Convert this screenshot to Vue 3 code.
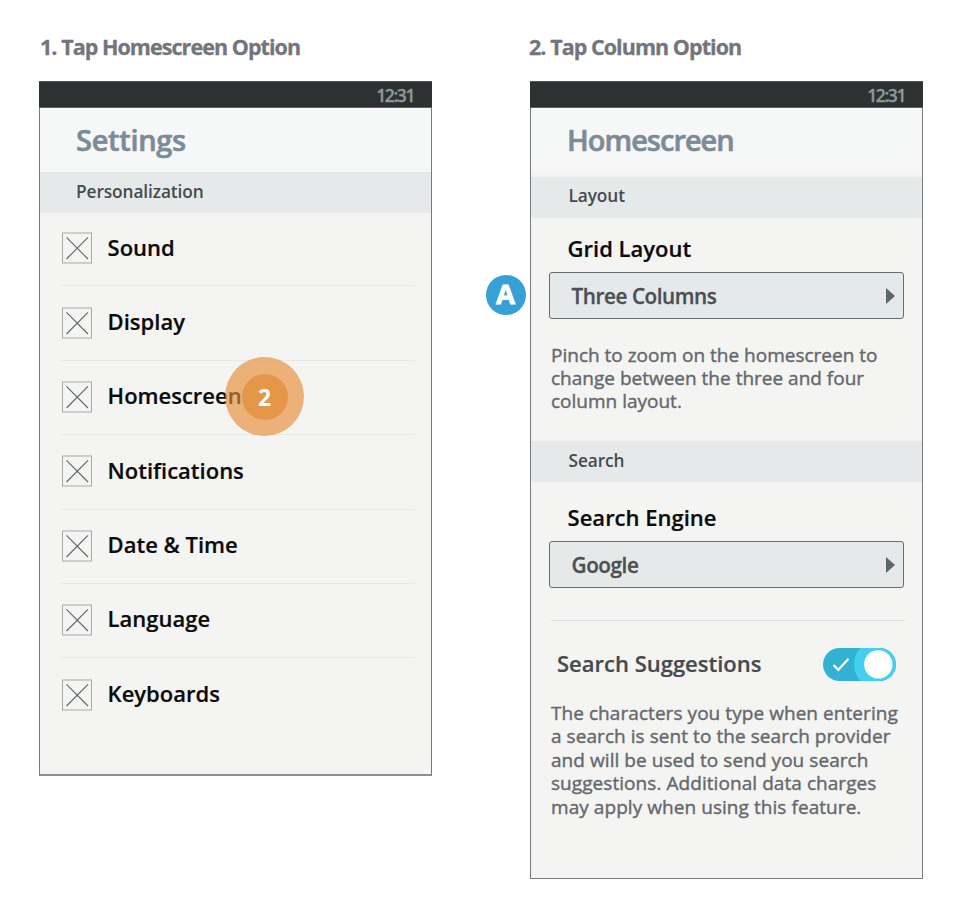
<script setup>
const options = ['Sound', 'Display', 'Homescreen', 'Notifications', 'Date & Time', 'Language', 'Keyboards']
const pinchHelp = `Pinch to zoom on the homescreen to
change between the three and four
column layout.`
const suggestHelp = `The characters you type when entering
a search is sent to the search provider
and will be used to send you search
suggestions. Additional data charges
may apply when using this feature.`
</script>

<template>
  <main class="board">
    <section class="step">
      <h2 class="step-title">1. Tap Homescreen Option</h2>
      <div class="phone phone-settings">
        <div class="status"><span>12:31</span></div>
        <header class="head">Settings</header>
        <div class="group">Personalization</div>
        <ul class="list">
          <li v-for="o in options" :key="o" class="row">
            <svg class="box" viewBox="0 0 32 32">
              <rect x="1.500" y="1" width="29" height="30" fill="none" stroke="#a3aaa8" />
              <path d="M5.500 5.300 27 27M27 5.300 5.500 27" stroke="#5b6966" stroke-width="1.100" fill="none" />
            </svg>
            <span class="label option">{{ o }}</span>
            <span v-if="o === 'Homescreen'" class="tap"><span class="tap-core">2</span></span>
          </li>
        </ul>
      </div>
    </section>

    <section class="step">
      <h2 class="step-title title-two">2. Tap Column Option</h2>
      <div class="phone phone-home">
        <div class="status"><span>12:31</span></div>
        <header class="head head-home">Homescreen</header>
        <div class="group group-layout">Layout</div>
        <div class="field">
          <div class="label field-label">Grid Layout</div>
          <div class="select">
            <span>Three Columns</span>
            <svg class="arrow" viewBox="0 0 9 16"><path d="M0 0 9 8 0 16Z" fill="#5b6966" /></svg>
            <span class="badge">A</span>
          </div>
        </div>
        <p class="help help-pinch">{{ pinchHelp }}</p>
        <div class="group group-search">Search</div>
        <div class="field field-engine">
          <div class="label field-label">Search Engine</div>
          <div class="select">
            <span>Google</span>
            <svg class="arrow" viewBox="0 0 9 16"><path d="M0 0 9 8 0 16Z" fill="#5b6966" /></svg>
          </div>
        </div>
        <hr class="rule" />
        <div class="suggest">
          <span class="label suggest-label">Search Suggestions</span>
          <svg class="toggle" viewBox="0 0 73 33">
            <rect width="73" height="33" rx="16.500" fill="#32b2d2" />
            <path d="M37.500 0H56.500a16.500 16.500 0 0 1 0 33H37.500Q31 26 31 16.500T37.500 0Z" fill="#43cef2" />
            <circle cx="55.300" cy="16.400" r="14.200" fill="#fff" />
            <path d="M10.500 17 15.300 21.800 25.500 10.800" fill="none" stroke="#fff" stroke-width="2.200" />
          </svg>
        </div>
        <p class="help help-suggest">{{ suggestHelp }}</p>
      </div>
    </section>
  </main>
</template>

<style>
body {
  margin: 0;
  background: #fff;
}
</style>

<style scoped>
.board {
  box-sizing: border-box;
  width: 966px;
  height: 922px;
  padding: 32px 0 0 39px;
  display: flex;
  gap: 98px;
  align-items: flex-start;
  font-family: 'Open Sans', 'Noto Sans', sans-serif;
  white-space: nowrap;
}
.step {
  width: 393px;
}
.step-title {
  margin: 0 0 19px 1px;
  height: 30px;
  line-height: 30px;
  font-size: 21.5px;
  font-weight: 700;
  letter-spacing: -0.95px;
  -webkit-text-stroke: 0.3px #74757b;
  color: #74757b;
}
.title-two {
  margin-left: -1px;
}
.phone {
  box-sizing: border-box;
  border: 1px solid #77797c;
  border-top: 0;
  background: #f4f4f2;
  display: flex;
  flex-direction: column;
}
.phone-settings {
  height: 695px;
  border-bottom-width: 2px;
  border-bottom-color: #8d8f92;
}
.phone-home {
  height: 798px;
}
.status {
  box-sizing: border-box;
  height: 27px;
  margin: 0 -1px;
  padding: 2px 18px 0 0;
  background: #2d3132;
  border-top: 1px solid #505656;
  border-bottom: 1px solid #5d6363;
  display: flex;
  justify-content: flex-end;
  line-height: 23px;
  font-size: 17.5px;
  font-weight: 600;
  letter-spacing: -1.4px;
  -webkit-text-stroke: 0.3px #8f9898;
  color: #8f9898;
}
.head {
  height: 64px;
  line-height: 64px;
  padding-left: 36px;
  background: #f6f8f8;
  font-size: 29px;
  font-weight: 600;
  letter-spacing: -0.3px;
  -webkit-text-stroke: 0.6px #7b8b98;
  color: #7b8b98;
}
.head-home {
  margin-bottom: 5px;
  letter-spacing: -1px;
}
.group {
  height: 41px;
  line-height: 39px;
  padding-left: 36px;
  background: #e5e9ea;
  font-size: 17.3px;
  font-weight: 600;
  letter-spacing: -0.1px;
  color: #454b4d;
}
.group-layout,
.group-search {
  padding-left: 37.5px;
  line-height: 38px;
}
.group-search {
  line-height: 40px;
}
.label {
  font-size: 22px;
  font-weight: 600;
  -webkit-text-stroke: 0.2px currentColor;
  color: #0b0b0b;
}
.list {
  list-style: none;
  margin: -1px 16px 0 21px;
  padding: 0;
}
.row {
  position: relative;
  box-sizing: border-box;
  height: 74.4px;
  padding-bottom: 1px;
  display: flex;
  align-items: center;
  gap: 14.6px;
  border-bottom: 1px solid #e6e8e8;
}
.row:last-child {
  border-bottom: 0;
}
.option {
  padding-bottom: 3.4px;
}
.box {
  width: 32px;
  height: 32px;
  flex: none;
}
.tap {
  position: absolute;
  left: 164px;
  top: -3.4px;
  width: 79px;
  height: 79px;
  border-radius: 50%;
  background: rgba(230, 142, 56, 0.65);
  display: flex;
  align-items: center;
  justify-content: center;
}
.tap-core {
  width: 46px;
  height: 46px;
  line-height: 46px;
  border-radius: 50%;
  background: #e59649;
  color: #fff;
  font-size: 23px;
  font-weight: 700;
  text-align: center;
}
.field {
  padding: 14px 18px 0 18px;
}
.field-engine {
  padding-top: 19px;
}
.field-label {
  height: 40px;
  line-height: 32px;
  padding-left: 18.6px;
}
.select {
  position: relative;
  box-sizing: border-box;
  height: 47px;
  border: 1px solid #63706d;
  border-radius: 3px;
  background: #e5e9ea;
  padding: 0 8px 0 21.6px;
  display: flex;
  align-items: center;
  justify-content: space-between;
  font-size: 20.7px;
  font-weight: 600;
  letter-spacing: -0.44px;
  -webkit-text-stroke: 0.3px #4a5052;
  color: #4a5052;
}
.arrow {
  width: 9px;
  height: 16px;
}
.badge {
  position: absolute;
  left: -64.5px;
  top: 2px;
  width: 40px;
  height: 40px;
  line-height: 38px;
  border-radius: 50%;
  background: #37a1d5;
  color: #fff;
  font-size: 27.5px;
  font-weight: 700;
  letter-spacing: 0;
  -webkit-text-stroke: 0.8px #fff;
  text-align: center;
}
.help {
  margin: 0;
  padding-left: 20px;
  font-size: 19px;
  -webkit-text-stroke: 0.4px #65686d;
  color: #65686d;
  white-space: pre;
}
.help-pinch {
  margin-top: 25px;
  height: 97px;
  line-height: 23px;
}
.rule {
  margin: 32px 17px 0 20px;
  border: 0;
  height: 1px;
  background: #dbdcde;
}
.suggest {
  margin-top: 27px;
  height: 33px;
  padding: 0 26px;
  display: flex;
  justify-content: space-between;
  align-items: center;
}
.suggest-label {
  padding-bottom: 4px;
  color: #454b4d;
}
.toggle {
  width: 73px;
  height: 33px;
}
.help-suggest {
  margin-top: 21px;
  line-height: 23.4px;
  letter-spacing: 0.06px;
}
</style>
